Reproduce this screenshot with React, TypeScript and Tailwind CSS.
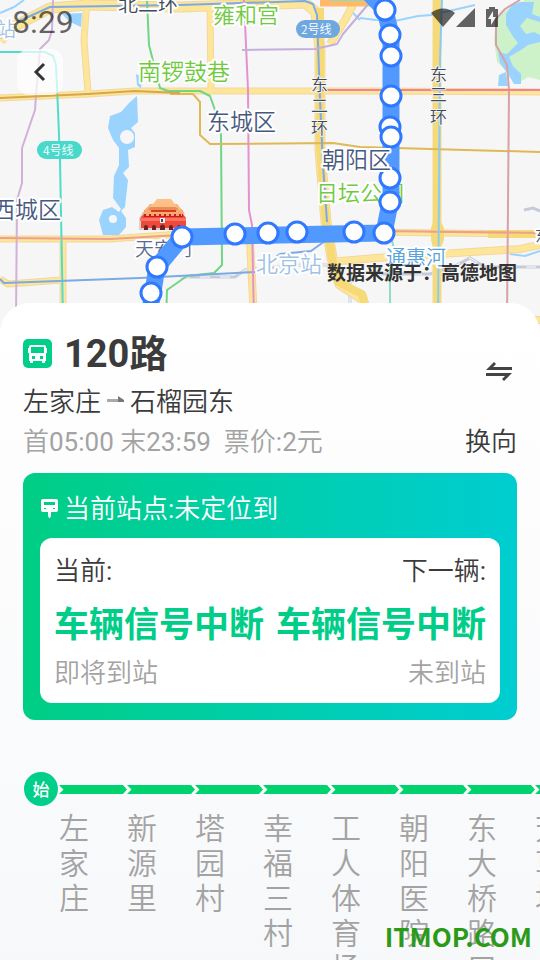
import { useState } from "react";

interface Station {
  id: number;
  name: string;
}

const STATIONS: Station[] = [
  "左家庄",
  "新源里",
  "塔园村",
  "幸福三村",
  "工人体育场",
  "朝阳医院",
  "东大桥路口",
  "芳草地",
].map((name, id) => ({ id, name }));

const ROUTE_STOPS = [
  [385, 10],
  [390, 35],
  [391, 56],
  [391, 96],
  [390, 127],
  [391, 137],
  [390, 178],
  [390, 202],
  [384, 233],
  [354, 232],
  [297, 232],
  [268, 233],
  [235, 234],
  [182, 237],
  [157, 267],
  [151, 293],
];

const ROADS = [
  { d: "M0 40L15 26L50 8L88 5L180 7L305 3L316 12L320 50V150L326 222L332 258L340 284L362 298L368 320", w: 9 },
  { d: "M87 0L84 40L88 93", w: 5 },
  { d: "M210 5L211 90", w: 5 },
  { d: "M0 98L88 94L135 91L360 91L540 92", w: 5 },
  { d: "M0 239L110 239L180 234L360 232L540 234", w: 5 },
  { d: "M0 279L8 284L62 280M63 240V320", w: 5 },
  { d: "M250 240L254 320", w: 6 },
  { d: "M437 0V320", w: 7 },
  { d: "M330 262L375 258L440 254L520 249L540 245", w: 6 },
  { d: "M330 44L345 20L353 5", w: 6 },
  { d: "M480 320H540", w: 6 },
];

const METRO = [
  { d: "M53 0L52 30L49 40L40 49L36 95L35 110L22 148V183L17 200L16 320", c: "#d3b0d8" },
  { d: "M0 52H45L53 56L56 65L58 110L60 160L63 320", c: "#4fdccb" },
  { d: "M147 0L149 45L160 88L168 91H200L210 96L215 110L221 135L222 265L214 273L187 276L167 290L166 320", c: "#6fd685" },
  { d: "M170 94H193L200 102V135L210 144L333 143L360 147L540 152", c: "#dfb953" },
  { d: "M0 38L17 22L50 7L180 5L305 1L313 4L317 15L320 100L323 165L327 222M325 241L311 251L280 254L274 258M0 279L4 283L140 278L255 272", c: "#7cabe4" },
  { d: "M244 0L248 90L249 210L252 225L254 320", c: "#e391d0" },
  { d: "M242 50L315 49L337 44L343 34L365 8L372 0", c: "#c3afd9" },
  { d: "M520 0L505 9L496 19V45L507 65L509 90L507 320", c: "#d6a2a7" },
  { d: "M322 90H540", c: "#ee8496" },
  { d: "M0 238L110 239L180 235L380 231L540 233", c: "#eda08b" },
  { d: "M0 98L88 94L135 91L180 93", c: "#d6a64d" },
  { d: "M442 0L440 60L438 320", c: "#8accf4" },
  { d: "M392 240L394 250L390 270V320", c: "#8fdcc9" },
];

const MAP_LABELS = [
  { x: 213, y: 23, text: "雍和宫", className: "fill-[#70ca3e] text-[22px]" },
  { x: 138, y: 80, text: "南锣鼓巷", className: "fill-[#70ca3e] text-[23px]" },
  { x: 316, y: 201, text: "日坛公园", className: "fill-[#70ca3e] text-[22px]" },
  { x: 207, y: 130, text: "东城区", className: "fill-[#47597f] text-[23px]" },
  { x: -8, y: 218, text: "西城区", className: "fill-[#47597f] text-[23px]" },
  { x: 135, y: 256, text: "天安门", className: "fill-[#5b6a90] text-[19px]" },
  { x: 256, y: 272, text: "北京站", className: "fill-[#9fc3e4] text-[22px]" },
  { x: -4, y: 37, text: "站", className: "fill-[#9fc3e4] text-[20px]" },
  { x: 386, y: 265, text: "通惠河", className: "fill-[#56a3dd] text-[20px]" },
  { x: 118, y: 12, text: "北二环", className: "fill-[#3f4a5a] text-[20px]" },
  { x: 535, y: 241, text: "东", className: "fill-[#3f4a5a] text-[16px]" },
];

function RingRoadLabel({ x, ys, chars }: { x: number; ys: number[]; chars: string[] }) {
  return (
    <g
      stroke="#f6f6f6"
      strokeWidth="2"
      strokeLinejoin="round"
      className="fill-[#3f4a5a] text-[17px] [paint-order:stroke]"
    >
      {chars.map((char, i) => (
        <text key={char} x={x} y={ys[i]}>
          {char}
        </text>
      ))}
    </g>
  );
}

function TiananmenIcon() {
  return (
    <g>
      <path d="M139 230V218L143 212H182L186 218V230Z" fill="#d6d3d0" />
      <path d="M141 228V217L145 213H182L186 218V228Z" fill="#ee4a3c" />
      <path d="M140 218H186V221H140Z" fill="#ff7361" />
      <path d="M144 211L148 207H178L183 211V217H144Z" fill="#c7201c" />
      <path d="M146 215H182" stroke="#ff9c78" strokeWidth="2" strokeDasharray="3 2" />
      <path d="M142 214L150 204H177L185 214Z" fill="#f6ad6d" />
      <path d="M151 208H176V212H151Z" fill="#d73a25" />
      <path d="M145 210L154 203L157 199H171L174 203L181 210Z" fill="#ffc087" />
      <path d="M150 207H176L179 210H147Z" fill="#e98d52" />
      <rect x="160" y="218" width="5" height="5" fill="#f4eeee" />
      <path d="M162 219V222" stroke="#444c61" strokeWidth="2" />
      <path
        d="M144 230V227a2 2 0 0 1 4 0V230ZM152 230V227a2 2 0 0 1 4 0V230ZM160 230V227a2 2 0 0 1 5 0V230ZM169 230V227a2 2 0 0 1 4 0V230ZM177 230V227a2 2 0 0 1 4 0V230Z"
        fill="#6d2325"
      />
    </g>
  );
}

function RouteMap() {
  return (
    <svg
      viewBox="0 0 540 335"
      preserveAspectRatio="xMidYMid slice"
      className="block h-[335px] w-full bg-[#f6f6f6] font-['Noto_Sans_CJK_SC_DemiLight','Noto_Sans_CJK_SC',sans-serif]"
      role="img"
      aria-label="120路线路地图"
    >
      {/* parks and water */}
      <path
        d="M496 20L506 10L525 0H540V80L528 77L517 84L505 70L497 62L494 40Z"
        fill="#cdf1c8"
      />
      <path
        d="M512 5L520 2H534L532 14L540 17V22L527 18L520 26L526 34L534 32L540 35V42L528 45L521 50L509 57L513 66L521 74V84H514L508 74L500 63L498 52L507 54L518 43L512 35L506 25V14ZM499 75L506 72L508 86H498Z"
        fill="#9bd3ff"
      />
      <path
        d="M137 96L129 103L121 112L110 116L108 128L113 140L119 148L119 165L114 176L113 198L121 209L119 212L112 207L103 210L99 220L103 235H119L126 227V218L121 211L125 207L128 180L123 173L129 167L128 150L135 147V133L131 128L138 122ZM62 14L82 13L81 27L70 22ZM136 74L142 77L141 89L137 85Z"
        fill="#9bd3ff"
      />
      <circle cx="127" cy="137" r="7" fill="#f6f6f6" />
      <circle cx="113" cy="219" r="4" fill="#f6f6f6" />
      <path
        d="M360 18L376 20L395 21L418 16L432 15L475 5M0 13L14 7L24 0M350 10L360 20M510 254L525 256L540 251"
        fill="none"
        stroke="#9bd3ff"
        strokeWidth="2"
      />

      {/* railways */}
      <path
        d="M180 277H235L245 270L300 265H330M372 274H430L455 266L470 258L485 267H540M524 210L533 208L540 211M350 275V320"
        fill="none"
        stroke="#c7cbd9"
        strokeWidth="3"
      />
      <path
        d="M180 277H235L245 270L300 265H330M372 274H430L455 266L470 258L485 267H540M350 275V320"
        fill="none"
        stroke="#ffffff"
        strokeWidth="1"
        strokeDasharray="10 10"
      />

      {/* roads */}
      <g fill="none" strokeLinejoin="round">
        {ROADS.map((road) => (
          <path key={road.d} d={road.d} stroke="#f3d79c" strokeWidth={road.w + 2} />
        ))}
        {ROADS.map((road) => (
          <path key={road.d} d={road.d} stroke="#fde699" strokeWidth={road.w} />
        ))}
      </g>
      <path
        d="M320 8L320 50V150L326 222L332 258L338 282L362 294L368 320M437 0V320M240 2H270M488 234H537"
        fill="none"
        stroke="#f6da78"
        strokeWidth="8"
        strokeLinejoin="round"
      />
      <path d="M433 222L441 222L444 228V240L441 247H433L431 240V228Z" fill="#f6da78" />
      <path d="M320 2H374" stroke="#ffb968" strokeWidth="9" />
      <path d="M330 0H372" stroke="#8cdbc3" strokeWidth="2" />
      <g fill="none" strokeWidth="2" strokeLinejoin="round">
        {METRO.map((line) => (
          <path key={line.d} d={line.d} stroke={line.c} />
        ))}
      </g>

      {/* place names */}
      <g stroke="#ffffff" strokeWidth="4" strokeLinejoin="round" className="[paint-order:stroke]">
        {MAP_LABELS.map((label) => (
          <text key={label.text} x={label.x} y={label.y} className={label.className}>
            {label.text}
          </text>
        ))}
      </g>
      <RingRoadLabel x={311} ys={[91, 112, 134]} chars={["东", "二", "环"]} />
      <RingRoadLabel x={430} ys={[81, 101, 123]} chars={["东", "三", "环"]} />
      <rect x="37" y="141" width="45" height="18" rx="9" fill="#49d9cb" />
      <text x="43" y="155" className="fill-white text-[12px]">
        4号线
      </text>
      <rect x="296" y="20" width="44" height="18" rx="9" fill="#6fa8df" />
      <text x="301" y="34" className="fill-white text-[12px]">
        2号线
      </text>
      <TiananmenIcon />

      {/* bus route */}
      <path
        d="M368 -8L385 10L391 35V198L384 233L182 237L157 267L150 310"
        fill="none"
        stroke="#5299ff"
        strokeWidth="17"
        strokeLinejoin="round"
      />
      {ROUTE_STOPS.map(([cx, cy]) => (
        <circle key={`${cx}-${cy}`} cx={cx} cy={cy} r="10" fill="#ffffff" stroke="#3079ff" strokeWidth="3" />
      ))}
      <text
        x="322"
        y="168"
        stroke="#ffffff"
        strokeWidth="4"
        strokeLinejoin="round"
        className="fill-[#47597f] text-[23px] [paint-order:stroke]"
      >
        朝阳区
      </text>
    </svg>
  );
}

function StatusBar() {
  return (
    <div className="flex h-9 items-start justify-between pr-[41px] pl-3 text-black/60">
      <span className="mt-1 text-[32px] leading-9">8:29</span>
      <svg width="68" height="22" viewBox="0 0 68 22" fill="currentColor" className="mt-[7px]" aria-hidden="true">
        <path d="M0 6C7 0 17 0 24 6L12 20Z" />
        <path d="M44 1V20H25Z" />
        <path fillRule="evenodd" d="M58 0H64V2H67V20H55V2H58ZM62 4L57 12H60L60 18L65 10H62Z" />
      </svg>
    </div>
  );
}

function BusIcon() {
  return (
    <svg width="29" height="29" viewBox="0 0 29 29" className="mb-[2px]" aria-hidden="true">
      <rect width="29" height="29" rx="5" fill="#00cf8a" />
      <path
        fillRule="evenodd"
        fill="#ffffff"
        d="M8 6H21Q23 6 23 8V9H24V14H23V22H22V24H19V22H10V24H7V22H6V14H5V9H6V8Q6 6 8 6ZM8 8V14H21V8ZM9 17V20H12V17ZM17 17V20H20V17Z"
      />
    </svg>
  );
}

function StopSignIcon() {
  return (
    <svg width="19" height="20" viewBox="0 0 19 20" aria-hidden="true">
      <path
        fillRule="evenodd"
        fill="#ffffff"
        d="M3 0H16Q18 0 18 2V11Q18 13 16 13H11V17L10 19H9L8 17V13H3Q1 13 1 11V2Q1 0 3 0ZM4 3V6H15V3ZM4 9V10H6V9ZM13 9V10H15V9Z"
      />
    </svg>
  );
}

function ArrivalColumn({
  label,
  value,
  hint,
  alignEnd,
}: {
  label: string;
  value: string;
  hint: string;
  alignEnd?: boolean;
}) {
  return (
    <div className={alignEnd ? "text-right" : "text-left"}>
      <p className="text-[26px] leading-10">{label}</p>
      <p className="font-[Roboto,'Noto_Sans_CJK_SC',sans-serif] text-[35px] leading-[70px] font-bold whitespace-nowrap text-[#00ce88]">
        {value}
      </p>
      <p className="text-[26px] leading-6 text-[#a3a3a3]">{hint}</p>
    </div>
  );
}

function StationTrack({ stations }: { stations: Station[] }) {
  return (
    <div className="mt-[52px] flex overflow-hidden pl-6">
      <span className="mr-px flex size-[34px] shrink-0 items-center justify-center rounded-full bg-[#00cf8a] font-['Noto_Sans_CJK_SC',sans-serif] text-[17px] font-medium text-white">
        始
      </span>
      <ol className="flex pt-[13px]">
        {stations.map((station) => (
          <li key={station.id} className="w-[68px] shrink-0">
            <svg width="68" height="9" viewBox="0 0 68 9" className="block" aria-hidden="true">
              <path d="M0 0H64L68 4.500L64 9H0L4.500 4.500Z" fill="#00d26e" />
            </svg>
            <p className="mt-[17px] w-[30px] text-[30px] leading-[35px] break-all text-[#a3a3a3]">
              {station.name}
            </p>
          </li>
        ))}
      </ol>
    </div>
  );
}

export default function App() {
  const [reversed, setReversed] = useState(false);
  const from = reversed ? "石榴园东" : "左家庄";
  const to = reversed ? "左家庄" : "石榴园东";
  const stations = reversed ? [...STATIONS].reverse() : STATIONS;

  return (
    <div
      lang="zh-CN"
      className="relative flex h-screen flex-col overflow-hidden bg-[#f7f8fa] font-[Roboto,'Noto_Sans_CJK_SC_DemiLight','Noto_Sans_CJK_SC',sans-serif] text-[#3b3b3b]"
    >
      <header className="relative shrink-0">
        <RouteMap />
        <div className="absolute inset-x-0 top-0">
          <StatusBar />
          <button
            aria-label="返回"
            className="mt-[13px] ml-[17px] flex size-[46px] items-center justify-center rounded-xl bg-white/70"
          >
            <svg width="14" height="20" viewBox="0 0 14 20" fill="none" stroke="#333333" strokeWidth="3" aria-hidden="true">
              <path d="M11 2L3 10L11 18" />
            </svg>
          </button>
        </div>
        <p className="absolute right-[23px] bottom-[49px] font-[Roboto,'Noto_Sans_CJK_SC',sans-serif] text-[19px] leading-6 font-bold text-[#333333]">
          数据来源于：高德地图
        </p>
      </header>

      <main className="relative -mt-8 flex-1 rounded-t-[30px] bg-linear-to-b from-white to-[#f7f8fa] pt-[27px]">
        <section className="flex justify-between px-[23px]">
          <div>
            <h1 className="flex h-12 items-center gap-3 font-[Roboto,'Noto_Sans_CJK_SC',sans-serif] text-[38px] font-bold">
              <BusIcon />
              120路
            </h1>
            <p className="flex h-12 items-center text-[26px]">
              {from}
              <svg width="29" height="20" viewBox="0 0 29 20" aria-hidden="true">
                <path d="M6 7H22V10H6Z" fill="#aaaaaa" />
                <path d="M17 4L23 8V10H17Z" fill="#777777" />
              </svg>
              {to}
            </p>
            <p className="text-[26px] leading-8 whitespace-pre text-[#a3a3a3]">首05:00 末23:59  票价:2元</p>
          </div>
          <button
            onClick={() => setReversed(!reversed)}
            className="flex flex-col items-end justify-between pt-[23px] text-[26px] leading-8"
          >
            <svg width="36" height="36" viewBox="0 0 36 36" fill="#444444" aria-hidden="true">
              <path d="M5 17L13 9L15 11L12 14H31V17ZM5 20H31L23 28L21 26L24 23H5Z" />
            </svg>
            换向
          </button>
        </section>

        <section className="mx-[23px] mt-[15px] rounded-xl bg-linear-to-r from-[#00ce84] to-[#00cdd0] p-[17px]">
          <h2 className="flex h-9 items-center gap-[5px] pt-[2px] text-[26px] text-white">
            <StopSignIcon />
            当前站点:未定位到
          </h2>
          <div className="mt-3 flex justify-between rounded-xl bg-white px-[14px] pt-[13px] pb-[18px]">
            <ArrivalColumn label="当前:" value="车辆信号中断" hint="即将到站" />
            <ArrivalColumn label="下一辆:" value="车辆信号中断" hint="未到站" alignEnd />
          </div>
        </section>

        <StationTrack stations={stations} />
      </main>

      <span className="absolute right-2 bottom-2 font-['Noto_Sans_CJK_SC',sans-serif] text-[26px] leading-8 font-bold text-[#2b9a18]">
        ITMOP.COM
      </span>
    </div>
  );
}
